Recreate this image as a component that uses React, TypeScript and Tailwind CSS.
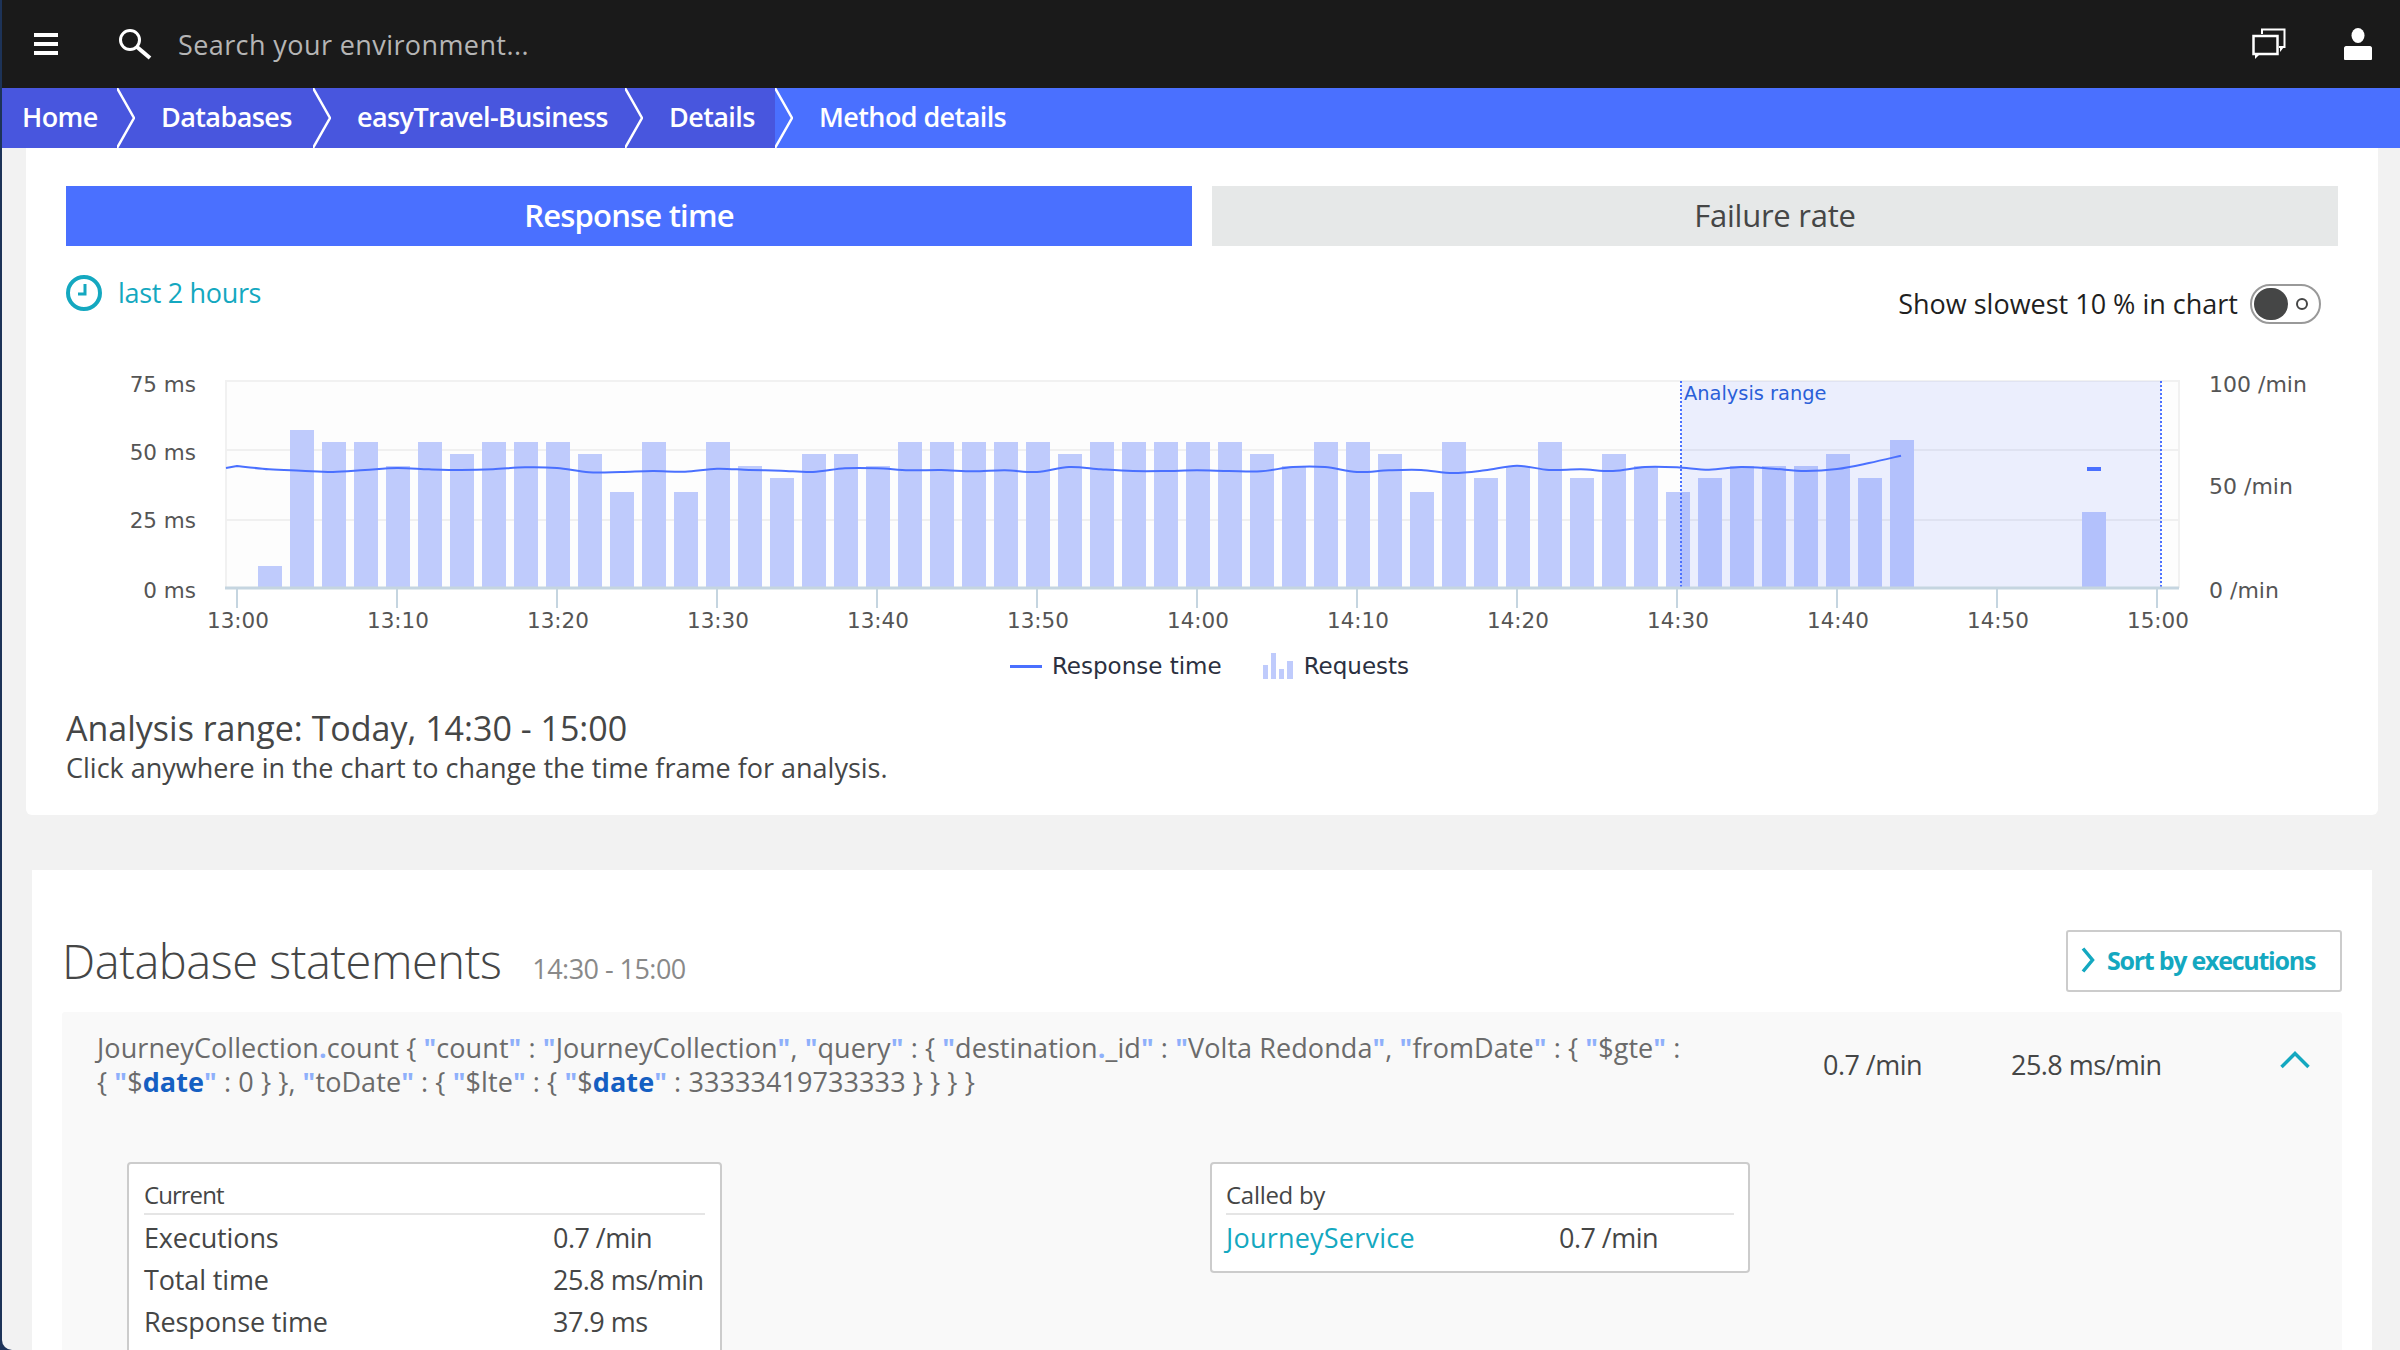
import React from 'react';

const BLUE = '#4a70ff';
const TEAL = '#14a8c0';

// bar tops read off the chart (px above baseline), one bar per 2 minutes from 13:02
const bars = [
  22, 158, 146, 146, 122, 146, 134, 146, 146, 146, 134, 96, 146, 96, 146, 122, 110,
  134, 134, 122, 146, 146, 146, 146, 146, 134, 146, 146, 146, 146, 146, 134, 122, 146, 146, 134, 96, 146, 110, 122, 146, 110,
  134, 122, 96, 110, 122, 122, 122, 134, 110, 148,
];

// response time line, y values at 13:00 + 2min * i
const line = [
  466, 469.3, 470.7, 472, 470, 468, 469.3, 470, 469.3, 467.3, 468, 472.3, 472, 471, 471.7, 468.7, 470, 470.7,
  472, 468.3, 468.3, 470.3, 470, 471.3, 470.3, 472, 467, 469.3, 471, 471, 470.3, 471, 471.3, 467, 467, 472, 470.3, 470, 473, 470.3, 465.7, 470, 469.3,
  471, 467, 467.3, 469.7, 467, 468.7, 471, 469, 463, 455.7,
];

function linePath() {
  const pts = line.map((y, i) => [237 + i * 32, y]);
  let d = `M226 468 L${pts[0][0]} ${pts[0][1]}`;
  for (let i = 0; i < pts.length - 1; i++) {
    const p0 = pts[Math.max(i - 1, 0)];
    const p1 = pts[i];
    const p2 = pts[i + 1];
    const p3 = pts[Math.min(i + 2, pts.length - 1)];
    d += ` C${p1[0] + (p2[0] - p0[0]) / 6} ${p1[1] + (p2[1] - p0[1]) / 6} ${p2[0] - (p3[0] - p1[0]) / 6} ${p2[1] - (p3[1] - p1[1]) / 6} ${p2[0]} ${p2[1]}`;
  }
  return d;
}

const ticks = ['13:00', '13:10', '13:20', '13:30', '13:40', '13:50', '14:00', '14:10', '14:20', '14:30', '14:40', '14:50', '15:00'];
const chartFont = { fontFamily: '"DejaVu Sans", sans-serif' };

function Chart() {
  return (
    <svg width="2272" height="281" viewBox="66 370 2272 281" style={chartFont} className="block overflow-visible">
      <rect x="225" y="380" width="1955" height="208" fill="#fdfdfd" />
      <path d="M226 588V381H2179V588" fill="none" stroke="#f1f1f1" strokeWidth="2" />
      <rect x="226" y="449" width="1953" height="2" fill="#f0f0f0" />
      <rect x="226" y="519" width="1953" height="2" fill="#f0f0f0" />
      {bars.map((h, i) => (
        <rect key={i} x={258 + i * 32} y={588 - h} width="24" height={h} fill="#bfcbfc" />
      ))}
      <rect x="2082" y="512" width="24" height="76" fill="#bfcbfc" />
      <rect x="1681" y="381" width="480" height="207" fill={BLUE} fillOpacity="0.1" />
      <path d={linePath()} fill="none" stroke={BLUE} strokeWidth="2" strokeLinejoin="round" />
      <rect x="2087" y="467" width="14" height="4" fill={BLUE} />
      <path d="M1681 381V588M2161 381V588" stroke={BLUE} strokeWidth="2" strokeDasharray="2 2" />
      <text x="1684" y="400" fontSize="19.4" fill="#2a5fd8">Analysis range</text>
      <rect x="225" y="586.5" width="1954" height="3" fill="#c5d5e0" />
      {ticks.map((t, i) => (
        <g key={t}>
          <rect x={236 + i * 160} y="589" width="2" height="19" fill="#c5d5e0" />
          <text x={238 + i * 160} y="628" fontSize="21.5" textAnchor="middle" fill="#555">
            {t}
          </text>
        </g>
      ))}
      {[['75 ms', 392], ['50 ms', 460], ['25 ms', 528], ['0 ms', 598]].map(([t, y]) => (
        <text key={t} x="196" y={y} fontSize="21.5" textAnchor="end" fill="#555">
          {t}
        </text>
      ))}
      {[['100 /min', 392], ['50 /min', 494], ['0 /min', 598]].map(([t, y]) => (
        <text key={t} x="2209" y={y} fontSize="22" fill="#555">
          {t}
        </text>
      ))}
    </svg>
  );
}

function Crumb({ label, width, pad, next }: { label: string; width: string; pad?: boolean; next?: boolean }) {
  return (
    <>
      <div className={`flex h-full shrink-0 items-center bg-[#4856de] pb-[2px] ${width} ${pad ? 'pl-[20px]' : 'pl-[26px]'}`}>{label}</div>
      <svg width="18" height="60" viewBox="0 0 18 60" className={next ? 'shrink-0 bg-[#4a70ff]' : 'shrink-0 bg-[#4856de]'}>
        <path d="M0 0 L17 30 L0 60" fill="none" stroke="#fff" strokeWidth="2.5" strokeLinejoin="round" />
      </svg>
    </>
  );
}

function Code({ text }: { text: string }) {
  return (
    <>
      {text.split(/(["]|\.|date)/).map((part, i) => {
        if (part === '"' || part === '.') return <span key={i} className="font-bold text-[#8fb0fb]">{part}</span>;
        if (part === 'date') return <span key={i} className="font-bold text-[#155fc2]">{part}</span>;
        return <span key={i}>{part}</span>;
      })}
    </>
  );
}

function MetricRow({ label, value }: { label: string; value: string }) {
  return (
    <div className="flex h-[42px] items-center text-[27px] text-[#454646]">
      <div className="w-[409px] tracking-[-0.005em]">{label}</div>
      <div className="tracking-[-0.02em]">{value}</div>
    </div>
  );
}

export default function App() {
  return (
    <div
      className="h-[1350px] w-[2400px] overflow-hidden bg-[#1d3358] pl-[2px]"
      style={{ fontFamily: '"Open Sans", sans-serif' }}
    >
      <div className="flex h-full flex-col overflow-hidden rounded-bl-[10px] bg-[#f2f2f2]">
        <header className="flex h-[88px] shrink-0 items-center bg-[#1a1a1a]">
          <svg width="26" height="24" viewBox="0 0 26 24" className="ml-[31px]">
            <path d="M1 3H25M1 12H25M1 21H25" stroke="#fff" strokeWidth="4" />
          </svg>
          <svg width="34" height="32" viewBox="0 0 34 32" className="ml-[59px]">
            <circle cx="12" cy="12" r="9.5" fill="none" stroke="#fff" strokeWidth="3" />
            <path d="M19 19L32 30" stroke="#fff" strokeWidth="4" />
          </svg>
          <span className="ml-[26px] pt-[3px] text-[27px] tracking-[0.015em] text-[#b5b5b5]">Search your environment...</span>
          <svg width="34" height="32" viewBox="0 0 34 32" className="ml-auto">
            <path d="M10 6V1.5H32.5V19H27" fill="none" stroke="#fff" strokeWidth="2" />
            <path d="M28 19V24L32 19" fill="#fff" />
            <rect x="1.5" y="8" width="24" height="18" fill="none" stroke="#fff" strokeWidth="2.5" />
            <path d="M3 26V31L8 26Z" fill="#fff" />
          </svg>
          <svg width="28" height="32" viewBox="0 0 28 32" className="ml-[58px] mr-[28px]">
            <ellipse cx="14" cy="7.5" rx="6.5" ry="7.5" fill="#fff" />
            <path d="M2 18H26C27 18 28 19 28 20V31C28 32 27 32 26 32H2C1 32 0 32 0 31V20C0 19 1 18 2 18Z" fill="#fff" />
          </svg>
        </header>

        <nav className="flex h-[60px] shrink-0 bg-[#4a70ff] text-[27px] font-semibold tracking-[-0.022em] text-white">
          <Crumb label="Home" width="w-[115px]" pad />
          <Crumb label="Databases" width="w-[178px]" />
          <Crumb label="easyTravel-Business" width="w-[294px]" />
          <Crumb label="Details" width="w-[132px]" next />
          <div className="flex items-center pb-[2px] pl-[26px]">Method details</div>
        </nav>

        <section className="ml-[24px] mr-[22px] h-[667px] shrink-0 rounded-b-[6px] bg-white px-[40px] pt-[38px]">
          <div className="flex gap-[20px] text-[31px]">
            <div className="flex h-[60px] flex-1 items-center justify-center bg-[#4a70ff] pb-[2px] font-semibold tracking-[-0.026em] text-white">Response time</div>
            <div className="flex h-[60px] flex-1 items-center justify-center bg-[#e6e8e8] pb-[2px] tracking-[-0.008em] text-[#454646]">Failure rate</div>
          </div>
          <div className="flex h-[124px] items-start justify-between">
            <div className="mt-[27px] flex items-center">
              <svg width="36" height="36" viewBox="0 0 36 36">
                <circle cx="18" cy="18" r="16" fill="none" stroke={TEAL} strokeWidth="4" />
                <path d="M19 9V19H12" fill="none" stroke={TEAL} strokeWidth="3" />
              </svg>
              <span className="ml-[16px] text-[27px] font-medium tracking-[-0.012em] text-[#14a8c0]">last 2 hours</span>
            </div>
            <div className="mr-[17px] mt-[38px] flex items-center">
              <span className="text-[27px] text-[#1f1f1f]">Show slowest 10 % in chart</span>
              <div className="ml-[12px] flex h-[40px] w-[71px] items-center rounded-full border-2 border-[#999] pl-[2px]">
                <div className="h-[32px] w-[34px] rounded-full bg-[#454646]" />
                <div className="ml-[8px] h-[12px] w-[12px] rounded-full border-2 border-[#454646]" />
              </div>
            </div>
          </div>
          <Chart />
          <div
            className="flex h-[30px] items-center justify-center gap-[41px] pl-[15px] text-[23px] text-[#2b3040]"
            style={chartFont}
          >
            <div className="flex items-center gap-[10px]">
              <div className="h-[3px] w-[32px] bg-[#4a70ff]" />
              Response time
            </div>
            <div className="flex items-center gap-[11px]">
              <svg width="30" height="26" viewBox="0 0 30 26">
                <path d="M0 12h5v14H0zM8 0h5v26H8zM16 16h5v10h-5zM24 8h6v18h-6z" fill="#bfcbfc" />
              </svg>
              Requests
            </div>
          </div>
          <h2 className="mt-[27px] h-[40px] text-[34px] leading-[40px] text-[#454646]">Analysis range: Today, 14:30 - 15:00</h2>
          <p className="mt-[2px] h-[36px] text-[27px] leading-[36px] text-[#454646]">Click anywhere in the chart to change the time frame for analysis.</p>
        </section>

        <section className="ml-[30px] mr-[28px] mt-[55px] flex-1 bg-white px-[30px] pt-[60px]">
          <div className="flex h-[62px] items-center justify-between">
            <div className="flex items-baseline">
              <h2 className="text-[47px] font-light tracking-[-0.01em] text-[#454646]">Database statements</h2>
              <span className="ml-[31px] text-[27px] tracking-[-0.02em] text-[#898989]">14:30 - 15:00</span>
            </div>
            <div className="flex h-[62px] w-[276px] items-center rounded-[3px] border-2 border-[#ccc] pb-[1px] pl-[13px] text-[25px] font-bold tracking-[-0.05em] text-[#14a8c0]">
              <svg width="14" height="26" viewBox="0 0 14 26" className="mb-[2px]">
                <path d="M2 1.5L11.5 13L2 24.5" fill="none" stroke={TEAL} strokeWidth="3.5" />
              </svg>
              <span className="ml-[12px]">Sort by executions</span>
            </div>
          </div>

          <div className="mt-[20px] h-[400px] rounded-[3px] bg-[#f9f9f9]">
            <div className="flex h-[106px] items-center">
              <div className="w-[1761px] shrink-0 pl-[35px] text-[27px] leading-[34px] tracking-[0.003em] text-[#6b6b6b]">
                <Code text={'JourneyCollection.count { "count" : "JourneyCollection", "query" : { "destination._id" : "Volta Redonda", "fromDate" : { "$gte" :'} />
                <br />
                <Code text={'{ "$date" : 0 } }, "toDate" : { "$lte" : { "$date" : 33333419733333 } } } }'} />
              </div>
              <div className="w-[188px] shrink-0 text-[27px] tracking-[-0.02em] text-[#454646]">0.7 /min</div>
              <div className="w-[269px] shrink-0 text-[27px] tracking-[-0.02em] text-[#454646]">25.8 ms/min</div>
              <svg width="30" height="18" viewBox="0 0 30 18" className="mb-[10px] shrink-0">
                <path d="M1.5 16L15 2.5L28.5 16" fill="none" stroke={TEAL} strokeWidth="3.5" />
              </svg>
            </div>
            <div className="mt-[44px] flex items-start gap-[488px] pl-[65px]">
              <div className="w-[595px] shrink-0 rounded-[4px] border-2 border-[#ccc] bg-white px-[15px] pb-[20px] pt-[16px]">
                <div className="h-[35px] border-b-2 border-[#e5e5e5] text-[24px] leading-[30px] tracking-[-0.04em] text-[#454646]">Current</div>
                <div className="mt-[2px]">
                  <MetricRow label="Executions" value="0.7 /min" />
                  <MetricRow label="Total time" value="25.8 ms/min" />
                  <MetricRow label="Response time" value="37.9 ms" />
                </div>
              </div>
              <div className="w-[540px] shrink-0 rounded-[4px] border-2 border-[#ccc] bg-white px-[14px] pb-[12px] pt-[16px]">
                <div className="h-[35px] border-b-2 border-[#e5e5e5] text-[24px] leading-[30px] tracking-[-0.012em] text-[#454646]">Called by</div>
                <div className="mt-[2px] flex h-[42px] items-center text-[27px]">
                  <div className="w-[333px] tracking-[0.008em] text-[#14a8c0]">JourneyService</div>
                  <div className="tracking-[-0.02em] text-[#454646]">0.7 /min</div>
                </div>
              </div>
            </div>
          </div>
        </section>
      </div>
    </div>
  );
}
